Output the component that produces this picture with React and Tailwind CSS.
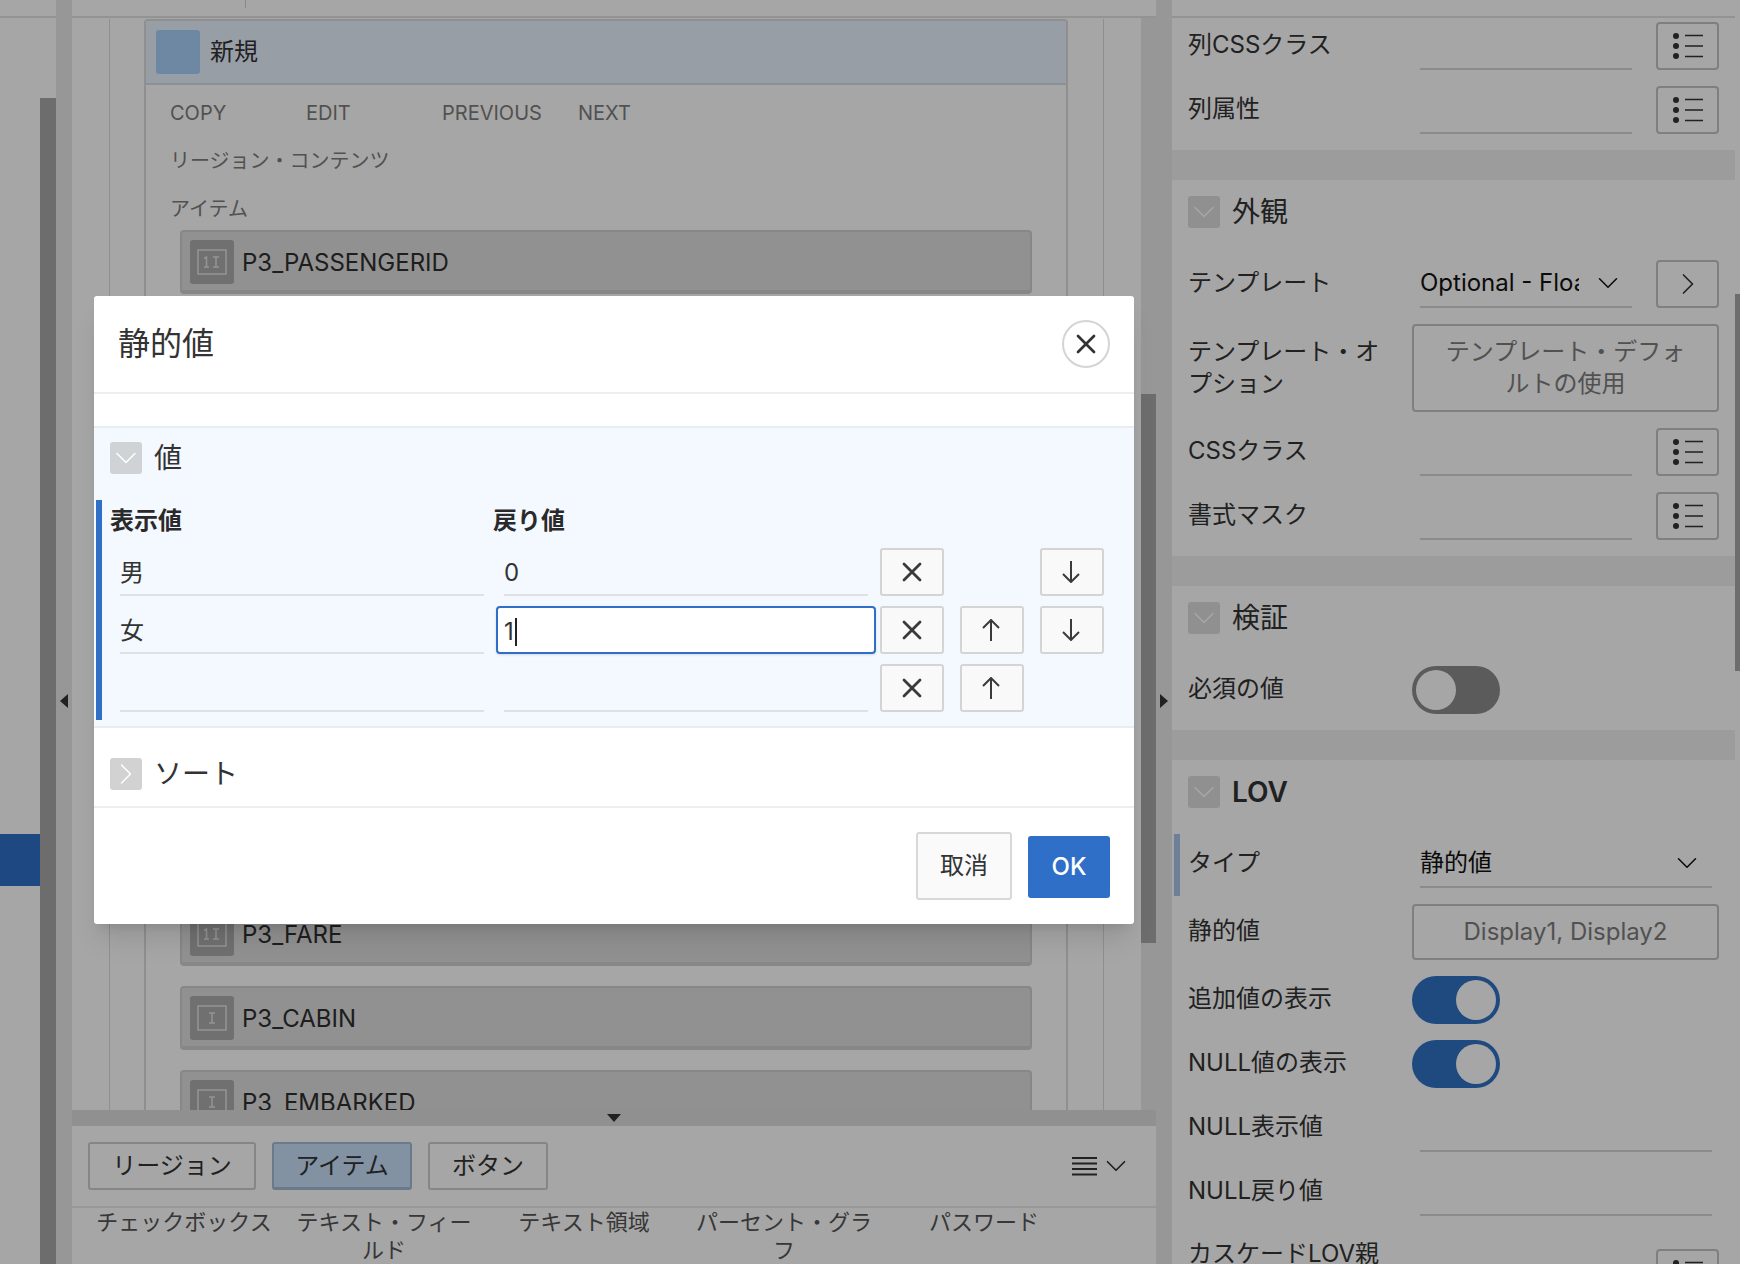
import { ChevronDown, ChevronRight, X } from "lucide-react";

const items = ["P3_PASSENGERID", "P3_PCLASS", "P3_NAME", "P3_SEX", "P3_AGE", "P3_SIBSP", "P3_PARCH", "P3_TICKET", "P3_FARE", "P3_CABIN", "P3_EMBARKED"];
const numeric = ["P3_PASSENGERID", "P3_PCLASS", "P3_AGE", "P3_SIBSP", "P3_PARCH", "P3_FARE"];
const palette = ["チェックボックス", "テキスト・フィールド", "テキスト領域", "パーセント・グラフ", "パスワード"];

function FieldIcon({ number }) {
  return (
    <svg width="32" height="32" viewBox="0 0 32 32" fill="none" stroke="#e4e4e4" strokeWidth="1.5">
      <rect x="2" y="4" width="28" height="24" />
      {number && <path d="M8 12.5l2.5-1.5v10M8 21h5" />}
      <path d={number ? "M17 11h6M20 11v10M17 21h6" : "M13 11h6M16 11v10M13 21h6"} />
    </svg>
  );
}

function ListIcon() {
  return (
    <svg width="30" height="26" viewBox="0 0 30 26" fill="#333" stroke="#333" strokeWidth="1.5">
      <circle cx="3" cy="3" r="3" stroke="none" />
      <circle cx="3" cy="13" r="3" stroke="none" />
      <circle cx="3" cy="23" r="3" stroke="none" />
      <path d="M12 2.500h18M12 13h18M12 23.500h18" fill="none" />
    </svg>
  );
}

function ArrowIcon({ up }) {
  return (
    <svg width="18" height="22" viewBox="0 0 18 22" fill="none" stroke="currentColor" strokeWidth="2" className={up ? "-ml-0.5 rotate-180" : "-ml-0.5"}>
      <path d="M9 0v21M1 13l8 8 8-8" />
    </svg>
  );
}

function ListButton({ children }) {
  return (
    <div className="ml-6 flex h-12 w-[63px] shrink-0 items-center justify-center rounded-sm border-2 border-[#c4c4c4] text-[#333]">
      {children || <ListIcon />}
    </div>
  );
}

function Field({ label, children }) {
  return (
    <div className="relative flex h-12 items-center">
      <span className="w-[224px] shrink-0 pb-0.5 leading-8">{label}</span>
      {children}
    </div>
  );
}

function TextField({ label }) {
  return (
    <Field label={label}>
      <div className="ml-2 h-full w-[212px] border-b-2 border-[#d6d6d6]" />
      <ListButton />
    </Field>
  );
}

function WideField({ label }) {
  return (
    <Field label={label}>
      <div className="ml-2 h-full w-[292px] border-b-2 border-[#d6d6d6]" />
    </Field>
  );
}

function Toggle({ on }) {
  return (
    <div className={`flex h-12 w-[88px] items-center rounded-full p-1 ${on ? "justify-end bg-[#2f72c5]" : "justify-start bg-[#8c8c8c]"}`}>
      <div className="h-10 w-10 rounded-full bg-white" />
    </div>
  );
}

function Collapse({ open = true, tone = "bg-[#dedede]" }) {
  return (
    <div className={`flex h-8 w-8 shrink-0 items-center justify-center rounded-[3px] text-white ${tone}`}>
      {open ? <ChevronDown className="shrink-0" size={36} strokeWidth={1} /> : <ChevronRight className="shrink-0" size={36} strokeWidth={1} />}
    </div>
  );
}

function PropSection({ title, bold, children }) {
  return (
    <section>
      <div className="mt-4 flex h-8 items-center gap-3 text-[28px]">
        <Collapse />
        <span className={bold ? "pt-0.5 font-semibold" : "pt-0.5"}>{title}</span>
      </div>
      <div className="mt-8 flex flex-col gap-4">{children}</div>
    </section>
  );
}

function ValueRow({ name, value, focused, up, down }) {
  return (
    <div className="flex h-12 pl-[18px] text-2xl">
      <div className="flex w-[364px] items-center border-b-2 border-[#dde1e6] pt-1">{name}</div>
      {focused ? (
        <div className="-mr-2 ml-3 flex w-[380px] items-center rounded-sm border-2 border-[#2f6fc7] bg-white pl-[6px] pt-1 shadow-sm">
          {value}
          <span className="ml-px h-7 w-0.5 bg-[#222]" />
        </div>
      ) : (
        <div className="ml-5 flex w-[364px] items-center border-b-2 border-[#dde1e6] pt-1">{value}</div>
      )}
      <div className="ml-3 flex w-[224px] gap-4">
        <MoveButton><X className="shrink-0" size={32} strokeWidth={2.1} /></MoveButton>
        {up ? <MoveButton><ArrowIcon up /></MoveButton> : <div className="w-16" />}
        {down && <MoveButton><ArrowIcon /></MoveButton>}
      </div>
    </div>
  );
}

function MoveButton({ children }) {
  return (
    <div className="flex h-12 w-16 items-center justify-center rounded-[3px] border-2 border-[#d4d4d4] bg-[#f9f9f9] text-[#3a3a3a]">
      {children}
    </div>
  );
}

function PageDesigner() {
  return (
    <div className="flex h-[1264px] w-[1740px] overflow-hidden bg-white text-[#333]">
      {/* left rail */}
      <div className="flex w-14 shrink-0">
        <div className="w-10">
          <div className="h-[18px] border-b-2 border-[#e2e2e2]" />
          <div className="mt-[816px] h-[52px] bg-[#2f6fc7]" />
        </div>
        <div className="w-4">
          <div className="h-[18px] border-b-2 border-[#e2e2e2]" />
          <div className="mt-20 h-[1166px] bg-[#a8a8a8]" />
        </div>
      </div>
      <div className="flex w-4 shrink-0 items-center justify-center bg-[#e8e8e8] pt-[138px]">
        <div className="h-0 w-0 border-y-[7px] border-r-[8px] border-y-transparent border-r-[#333]" />
      </div>

      {/* center */}
      <div className="flex w-[1084px] shrink-0 flex-col">
        <div className="h-[18px] border-b-2 border-[#e2e2e2] pl-[173px]">
          <div className="h-2 w-px bg-[#d0d0d0]" />
        </div>
        <div className="flex h-[1092px]">
          <div className="h-full w-[1069px] overflow-hidden pl-[37px] pr-[37px]">
            <div className="h-full border-x border-[#dcdcdc] pl-[34px] pr-[35px]">
              <div className="mt-px h-full rounded-t-sm border-x-2 border-t-2 border-[#dcdcdc]">
                <div className="flex h-[64px] items-center gap-[10px] border-b-2 border-[#d6dee9] bg-[#eaf3ff] pl-[10px] text-2xl">
                  <div className="h-11 w-11 rounded-[3px] bg-[#a9d0fb]" />
                  新規
                </div>
                <div className="mt-3 flex pl-6 text-xl leading-8 text-[#7d7d7d]">
                  <span className="w-[136px]">COPY</span>
                  <span className="w-[136px]">EDIT</span>
                  <span className="w-[136px]">PREVIOUS</span>
                  <span>NEXT</span>
                </div>
                <div className="mt-4 pl-6 text-xl leading-8 text-[#7d7d7d]">リージョン・コンテンツ</div>
                <div className="mt-4 pl-6 text-xl leading-8 text-[#7d7d7d]">アイテム</div>
                <div className="mt-[5px] flex flex-col gap-5 pl-[34px] pr-[34px]">
                  {items.map((name) => (
                    <div key={name} className="flex h-16 shrink-0 items-start gap-2 rounded-sm border-2 border-b-4 border-[#d0d0d0] bg-[#dfdfdf] pl-2 pt-2 text-2xl text-[#2e2e2e]">
                      <div className="flex h-11 w-11 items-center justify-center rounded-[3px] bg-[#acacac]">
                        <FieldIcon number={numeric.includes(name)} />
                      </div>
                      <span className="pt-px leading-11">{name}</span>
                    </div>
                  ))}
                </div>
              </div>
            </div>
          </div>
          <div className="h-full w-[15px] bg-[#e8e8e8]">
            <div className="mt-[376px] h-[549px] bg-[#a8a8a8]" />
          </div>
        </div>
        <div className="flex h-4 justify-center bg-[#dedede] pt-1">
          <div className="h-0 w-0 border-x-[7px] border-t-[8px] border-x-transparent border-t-[#333]" />
        </div>
        <div className="flex h-[82px] items-start gap-4 border-b-2 border-[#eaeaea] pl-4 pr-4 pt-4 text-2xl">
          <div className="flex h-12 w-[168px] items-center justify-center rounded-[3px] border-2 border-[#cdcdcd]">リージョン</div>
          <div className="flex h-12 w-[140px] items-center justify-center rounded-[3px] border-2 border-b-[3px] border-[#a5bcd4] bg-[#c9e1fa]">アイテム</div>
          <div className="flex h-12 w-[120px] items-center justify-center rounded-[3px] border-2 border-[#cdcdcd]">ボタン</div>
          <div className="ml-auto mr-[7px] flex h-12 items-center gap-0.5">
            <svg width="25" height="20" viewBox="0 0 25 20" stroke="#333" strokeWidth="2"><path d="M0 2h25M0 7.500h25M0 13h25M0 18.500h25" /></svg>
            <ChevronDown size={34} strokeWidth={1.2} />
          </div>
        </div>
        <div className="flex pl-3 text-[22px] leading-7 text-[#555]">
          {palette.map((name) => (
            <div key={name} className="w-[200px] px-2.5 text-center">{name}</div>
          ))}
        </div>
      </div>

      <div className="flex w-4 shrink-0 items-center justify-center bg-[#e8e8e8] pt-[138px]">
        <div className="h-0 w-0 border-y-[7px] border-l-[8px] border-y-transparent border-l-[#333]" />
      </div>

      {/* properties */}
      <div className="flex h-full w-[568px] shrink-0 overflow-hidden text-2xl">
        <div className="w-[563px]">
          <div className="h-[18px] border-b-2 border-[#e2e2e2]" />
          <div className="flex flex-col gap-4 pl-4 pt-1">
            <TextField label="列CSSクラス" />
            <TextField label="列属性" />
          </div>
          <div className="mt-4 h-[30px] bg-[#f0f0f0]" />
          <div className="pl-4">
            <PropSection title="外観">
              <Field label="テンプレート">
                <div className="ml-2 flex h-full w-[212px] items-center border-b-2 border-[#d6d6d6] text-[#111]">
                  <span className="w-[159px] shrink-0 overflow-hidden whitespace-nowrap">Optional - Float</span>
                  <ChevronDown className="ml-3 shrink-0" size={34} strokeWidth={1.1} />
                </div>
                <ListButton><ChevronRight className="shrink-0" size={36} strokeWidth={1.1} /></ListButton>
              </Field>
              <div className="flex h-[88px]">
                <span className="w-[224px] shrink-0 pr-4 pt-3 leading-8">テンプレート・オプション</span>
                <div className="flex w-[307px] items-center justify-center rounded-sm border-2 border-[#c4c4c4] px-6 text-center leading-8 text-[#7d7d7d]">
                  テンプレート・デフォルトの使用
                </div>
              </div>
              <TextField label="CSSクラス" />
              <TextField label="書式マスク" />
            </PropSection>
          </div>
          <div className="mt-4 h-[30px] bg-[#f0f0f0]" />
          <div className="pl-4">
            <PropSection title="検証">
              <Field label="必須の値"><Toggle /></Field>
            </PropSection>
          </div>
          <div className="mt-4 h-[30px] bg-[#f0f0f0]" />
          <div className="pl-4">
            <PropSection title="LOV" bold>
              <div className="relative">
                <div className="absolute -bottom-2 -left-[14px] -top-1.5 w-1.5 bg-[#a9c3ea]" />
                <Field label="タイプ">
                  <div className="ml-2 flex h-full w-[292px] items-center justify-between border-b-2 border-[#d6d6d6] pr-2 text-[#111]">
                    <span>静的値</span>
                    <ChevronDown className="shrink-0" size={34} strokeWidth={1.1} />
                  </div>
                </Field>
              </div>
              <div className="flex h-14 items-center">
                <span className="w-[224px] shrink-0 pb-0.5">静的値</span>
                <div className="flex h-14 w-[307px] items-center justify-center rounded-sm border-2 border-[#c4c4c4] text-[#7d7d7d]">Display1, Display2</div>
              </div>
              <Field label="追加値の表示"><Toggle on /></Field>
              <Field label="NULL値の表示"><Toggle on /></Field>
              <WideField label="NULL表示値" />
              <WideField label="NULL戻り値" />
              <div className="flex">
                <span className="mt-1.5 w-[224px] shrink-0 pr-4 leading-8">カスケードLOV親アイテム</span>
                <div className="ml-[220px] mt-[17px]"><ListButton /></div>
              </div>
            </PropSection>
          </div>
        </div>
        <div className="w-[5px]">
          <div className="mt-[294px] h-[377px] bg-[#a8a8a8]" />
        </div>
      </div>
    </div>
  );
}

export default function App() {
  return (
    <div className="relative h-[1264px] w-[1740px] overflow-hidden font-['Inter','Noto_Sans_CJK_JP',sans-serif]">
      <PageDesigner />
      <div className="absolute inset-0 bg-black/35" />

      <div className="absolute left-[94px] top-[296px] flex h-[628px] w-[1040px] flex-col rounded-[3px] bg-white text-[#333] shadow-xl">
        <div className="flex h-[98px] shrink-0 items-center justify-between border-b-2 border-[#eeeeee] pl-6 pr-6">
          <span className="text-[32px]">静的値</span>
          <div className="mb-px flex h-12 w-12 items-center justify-center rounded-full border-2 border-[#d4d4d4] text-[#333]">
            <X className="shrink-0" size={32} strokeWidth={2} />
          </div>
        </div>
        <div className="mt-8 h-[302px] shrink-0 border-y-2 border-[#e8edf2] bg-[#f4f9ff] pt-[14px]">
          <div className="flex h-8 items-center gap-3 pl-4 text-[28px]">
            <Collapse tone="bg-[#cfd3d6]" />
            値
          </div>
          <div className="ml-0.5 mt-[26px] h-[220px] border-l-[6px] border-[#2f6fc7]">
            <div className="flex h-[42px] items-center pl-2 text-2xl font-bold text-[#2a2a2a]">
              <span className="w-[383px]">表示値</span>
              <span>戻り値</span>
            </div>
            <div className="mt-1.5 flex flex-col gap-2.5">
              <ValueRow name="男" value="0" down />
              <ValueRow name="女" value="1" focused up down />
              <ValueRow up />
            </div>
          </div>
        </div>
        <div className="flex h-[80px] shrink-0 items-start gap-3 border-b-2 border-[#eeeeee] pl-4 pt-[30px] text-[28px]">
          <Collapse open={false} tone="bg-[#d2d2d2]" />
          <span className="leading-8">ソート</span>
        </div>
        <div className="flex flex-1 items-center justify-end gap-4 pr-6 pt-0.5 text-2xl">
          <div className="-mt-0.5 flex h-[68px] w-[96px] items-center justify-center rounded-[3px] border-2 border-[#d8d8d8] bg-[#fafafa]">取消</div>
          <div className="flex h-[62px] w-[82px] items-center justify-center rounded-[3px] bg-[#2f6fc7] font-medium text-white">OK</div>
        </div>
      </div>
    </div>
  );
}
